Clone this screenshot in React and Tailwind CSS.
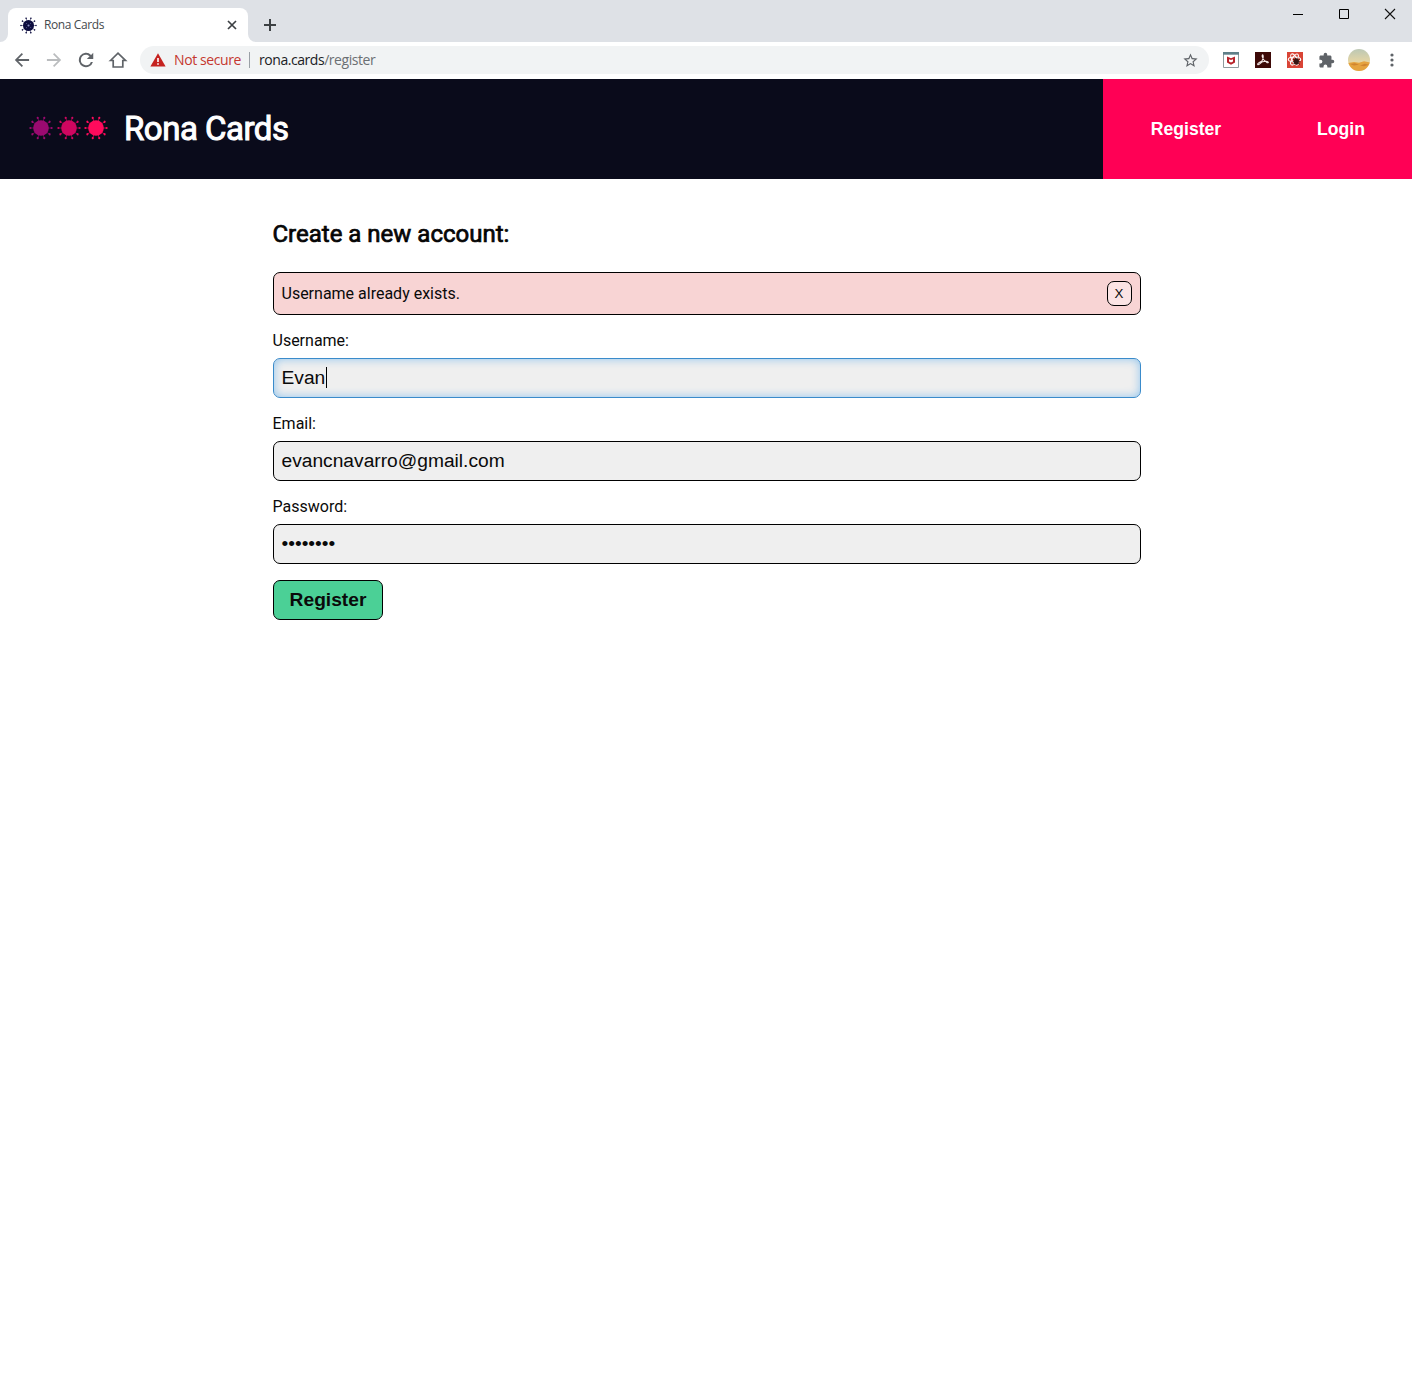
import React from "react";

const SPIKES = [0, 36, 72, 108, 144, 180, 216, 252, 288, 324];

function Virus({ size, color, body = 7.8, core, className = "" }) {
  return (
    <svg width={size} height={size} viewBox="0 0 24 24" fill={color} stroke={color} className={className}>
      <circle cx="12" cy="12" r={body} stroke="none" />
      {SPIKES.map((a) => (
        <g key={a} transform={`rotate(${a + 18} 12 12)`}>
          <path d="M12 5V1.5" strokeWidth=".8" strokeOpacity=".75" />
          <circle cx="12" cy="1.4" r="1.1" stroke="none" />
        </g>
      ))}
      {core && (
        <g fill={core} stroke="none">
          <circle cx="12" cy="12" r="1.5" />
          <circle cx="9" cy="9" r=".7" />
          <circle cx="15" cy="9" r=".7" />
          <circle cx="9" cy="15.2" r=".7" />
          <circle cx="15.2" cy="15" r=".7" />
        </g>
      )}
    </svg>
  );
}

function Glyph({ d, size = 20, color = "#5f6368", className = "" }) {
  return (
    <svg width={size} height={size} viewBox="0 0 24 24" fill={color} className={className}>
      <path d={d} />
    </svg>
  );
}

function TabStrip() {
  return (
    <div className="flex h-[42px] items-start bg-[#dee1e6]">
      <div className="mt-2 flex h-[34px] items-end">
        <svg width="8" height="8" viewBox="0 0 8 8" className="shrink-0"><path d="M8 0v8H0a8 8 0 0 0 8-8z" fill="#fff" /></svg>
        <div className="flex h-[34px] w-[240px] items-center rounded-t-lg bg-white pl-3 pr-[10px]">
          <Virus size={17} color="#0d0d3f" core="#8d90c4" />
          <span className="ml-[7px] flex-1 font-['Open_Sans'] text-[12px] tracking-[-0.4px] text-[#45494d]">Rona Cards</span>
          <svg width="12" height="12" viewBox="0 0 12 12" stroke="#3c4043" strokeWidth="1.7"><path d="M2 2l8 8M10 2l-8 8" /></svg>
        </div>
        <svg width="8" height="8" viewBox="0 0 8 8" className="shrink-0"><path d="M0 0v8h8a8 8 0 0 1-8-8z" fill="#fff" /></svg>
      </div>
      <svg width="12" height="12" viewBox="0 0 12 12" className="ml-2 mt-[19px]" stroke="#3c4043" strokeWidth="2"><path d="M6 0v12M0 6h12" /></svg>
      <div className="ml-auto mr-4 mt-2 flex gap-[34px]">
        <svg width="12" height="12" viewBox="0 0 12 12" stroke="#000"><path d="M1 6.5h10" /></svg>
        <svg width="12" height="12" viewBox="0 0 12 12" fill="none" stroke="#000"><path d="M1.5 1.5h9v9h-9z" /></svg>
        <svg width="12" height="12" viewBox="0 0 12 12" stroke="#111" strokeWidth="1.1"><path d="M1 1l10 10M11 1L1 11" /></svg>
      </div>
    </div>
  );
}

function Extensions() {
  return (
    <div className="ml-[14px] flex items-center gap-4">
      <svg width="16" height="16" viewBox="0 0 16 16">
        <path d="M.5.5h15v15H.5z" fill="#fff" stroke="#8f9b9e" />
        <path d="M0 0h16v2.7H0z" fill="#5f7f88" />
        <path d="M4 4.6l4 1.6 4-1.6v6L8 12.7l-4-2.1z" fill="#b8242b" />
        <path d="M6 7.2l2 .9 2-.9v2.3l-2 1-2-1z" fill="#fff" />
      </svg>
      <svg width="16" height="16" viewBox="0 0 16 16">
        <path d="M0 0h16v16H0z" fill="#3d0907" />
        <path d="M2.8 12.6c-.8-.9 2-2.5 4-3.3C8.500 6 8.600 4.500 7.900 3.100c-.4-.7-1 .3-.6 1.700.5 2.100 2.200 4.200 4.400 5.600 1.100.6 1.900.2 1.500-.3-.7-.8-4-.8-6.400-.1-1.300 1-2.900 3.500-4 2.600z" fill="none" stroke="#f4e9e8" strokeWidth="1.1" />
      </svg>
      <svg width="16" height="16" viewBox="0 0 16 16">
        <path d="M0 0h16v16H0z" fill="#d94436" />
        <g fill="none" stroke="#fff" strokeWidth="1.100">
          <ellipse cx="7.500" cy="7.500" rx="6.200" ry="2.500" />
          <ellipse cx="7.500" cy="7.500" rx="6.200" ry="2.500" transform="rotate(60 7.500 7.500)" />
          <ellipse cx="7.500" cy="7.500" rx="6.200" ry="2.500" transform="rotate(120 7.500 7.500)" />
        </g>
        <ellipse cx="9.300" cy="9.600" rx="2.600" ry="3.100" fill="#351411" />
        <path d="M6 7l7 5.500M12.700 7.200L6.500 12M5.800 9.700h7.500M8 5.600l1.300 2 1.500-2" stroke="#351411" strokeWidth=".9" fill="none" />
      </svg>
      <Glyph size={17} className="-ml-px" d="M20.500 11H19V7c0-1.100-.9-2-2-2h-4V3.500a2.500 2.500 0 0 0-5 0V5H4c-1.100 0-2 .9-2 2v3.800h1.500a2.700 2.700 0 0 1 0 5.400H2V20c0 1.100.9 2 2 2h3.800v-1.500a2.700 2.700 0 0 1 5.400 0V22H17c1.100 0 2-.9 2-2v-4h1.500a2.500 2.500 0 0 0 0-5z" />
      <svg width="22" height="22" viewBox="0 0 22 22" className="-ml-[3px]">
        <defs>
          <linearGradient id="sky" x2="0" y2="1"><stop stopColor="#bcc8b5" /><stop offset=".6" stopColor="#e6d6a4" /></linearGradient>
          <clipPath id="round"><circle cx="11" cy="11" r="11" /></clipPath>
        </defs>
        <g clipPath="url(#round)">
          <path d="M0 0h22v22H0z" fill="url(#sky)" />
          <path d="M0 14l6-1 5 .8 5-1.600 6 1.400v9H0z" fill="#e5a33f" />
          <path d="M2 15l5-.7 4 1.500-5 .7zM12 16.500l5-1.700 4 1-5 1.500z" fill="#d08430" />
        </g>
      </svg>
    </div>
  );
}

function Toolbar() {
  return (
    <div className="flex h-[37px] items-center bg-white pb-px pl-3">
      <div className="flex gap-3">
        <Glyph d="M20.500 10.800H7.500l5.700-5.600L11.700 3.700 3.400 12l8.300 8.300 1.500-1.500-5.700-5.600h13z" />
        <Glyph color="#babcbe" d="M12.300 3.700l-1.500 1.500 5.700 5.600h-13v2.400h13l-5.700 5.600 1.500 1.500 8.300-8.300z" />
        <Glyph d="M18.100 5.900A8.600 8.600 0 1 0 20.300 14.300h-2.500A6.200 6.200 0 1 1 12 5.800c1.700 0 3.200.7 4.300 1.800L13 10.900h7.700V3.300z" />
        <svg width="20" height="20" viewBox="0 0 20 20" fill="none" stroke="#5f6368" strokeWidth="1.700"><path d="M2.500 10.500L10 3.200l7.500 7.300h-2.700V17H5.200v-6.500z" /></svg>
      </div>
      <div className="ml-3 flex h-7 w-[1069px] items-center rounded-full bg-[#f1f3f4] pl-[10px] pr-[10px] font-['Open_Sans'] text-[14px]">
        <svg width="16" height="14" viewBox="0 0 16 14" className="-mt-px"><path d="M8 .3L15.600 13.500H.4z" fill="#c5221f" /><path d="M7.200 5h1.600v4H7.200zM7.200 10.200h1.600v1.600H7.200z" fill="#fff" /></svg>
        <span className="-mt-0.5 ml-2 w-[67px] whitespace-nowrap tracking-[-0.4px] text-[#c5372f]">Not secure</span>
        <span className="ml-2 h-4 w-px bg-[#9aa0a6]" />
        <span className="-mt-0.5 ml-[9px] whitespace-nowrap tracking-[-0.45px] text-[#202124]">rona.cards<span className="text-[#6b6f73]">/register</span></span>
        <Glyph size={17} className="ml-auto" d="M22 9.240l-7.190-.62L12 2 9.190 8.630 2 9.240l5.460 4.730L5.820 21 12 17.270 18.180 21l-1.630-7.030L22 9.240zM12 15.400l-3.760 2.270 1-4.280-3.320-2.880 4.380-.38L12 6.100l1.710 4.040 4.380.38-3.320 2.880 1 4.280L12 15.400z" />
      </div>
      <Extensions />
      <svg width="4" height="14" viewBox="0 0 4 14" fill="#5f6368" className="ml-5"><circle cx="2" cy="2" r="1.600" /><circle cx="2" cy="7" r="1.600" /><circle cx="2" cy="12" r="1.600" /></svg>
    </div>
  );
}

function Header() {
  return (
    <header className="flex h-[100px] items-center bg-[#0a0b1b] pl-[29px] text-white">
      <div className="-mt-[2px] flex gap-[3.5px]">
        <Virus size={24} color="#9a0a70" className="overflow-visible" />
        <Virus size={24} color="#cf0660" className="overflow-visible" />
        <Virus size={24} color="#ff0a5c" className="overflow-visible" />
      </div>
      <h1 className="ml-[16px] whitespace-nowrap font-['Roboto'] text-[33px] font-normal tracking-[-0.5px] [-webkit-text-stroke:1px_white]">Rona Cards</h1>
      <nav className="ml-auto flex h-full w-[309px] bg-[#ff0055] font-['Liberation_Sans'] text-[17.6px] font-bold">
        <a className="flex w-[166px] items-center justify-center">Register</a>
        <a className="flex flex-1 items-center justify-center pl-px">Login</a>
      </nav>
    </header>
  );
}

function Field({ label, value, focused }) {
  const frame = focused
    ? "border-[#3a8bcb] shadow-[inset_0_0_10px_#8fc4ee]"
    : "border-black";
  return (
    <div className="mb-[16px]">
      <div className="mb-2 h-[19px] leading-[19px]">{label}</div>
      <div className={`flex h-10 items-center rounded-[7px] border bg-[#efefef] px-2 font-['Liberation_Sans'] text-[19.2px] ${frame}`}>
        {value}
        {focused && <span className="-mt-px ml-[0.5px] h-[21px] w-px bg-black" />}
      </div>
    </div>
  );
}

export default function App() {
  return (
    <div className="min-h-[1382px] bg-white">
      <TabStrip />
      <Toolbar />
      <Header />
      <main className="ml-[272.5px] w-[868px] pt-[39px] font-['Roboto'] text-[16px] text-[#0a0a0a]">
        <h2 className="h-8 text-[24px] font-normal leading-8 [-webkit-text-stroke:0.7px_black]">Create a new account:</h2>
        <div className="mb-4 mt-[22px] flex h-[43px] items-center justify-between rounded-[7px] border border-black bg-[#f8d4d4] px-2">
          <span>Username already exists.</span>
          <button className="flex h-[25px] w-[25px] items-center justify-center rounded-[7px] border border-black bg-[#fbe4e4] font-['Liberation_Sans'] text-[13.3px]">X</button>
        </div>
        <Field label="Username:" value="Evan" focused />
        <Field label="Email:" value="evancnavarro@gmail.com" />
        <Field label="Password:" value="••••••••" />
        <button className="h-10 w-[110px] rounded-[7px] border border-black bg-[#4bd096] pl-px font-['Liberation_Sans'] text-[19.2px] font-bold">Register</button>
      </main>
    </div>
  );
}
